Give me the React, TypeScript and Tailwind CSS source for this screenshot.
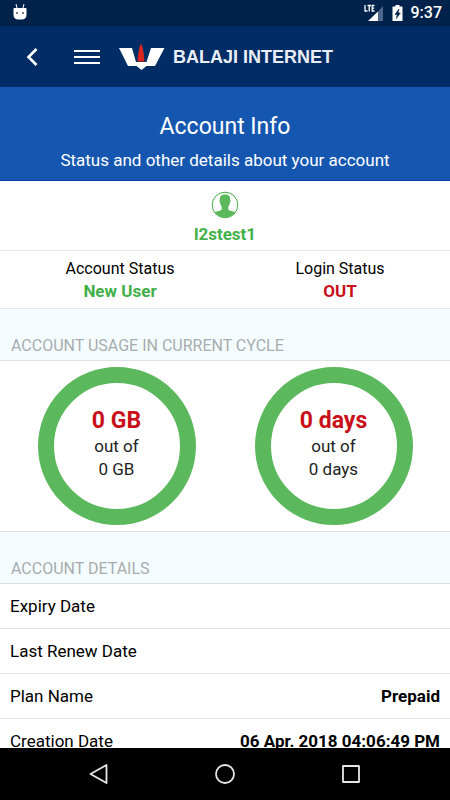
import type { ReactNode } from 'react';

const details = [
  { label: 'Expiry Date', value: '' },
  { label: 'Last Renew Date', value: '' },
  { label: 'Plan Name', value: 'Prepaid' },
  { label: 'Creation Date', value: '06 Apr. 2018 04:06:49 PM' },
];

function StatusBar() {
  return (
    <div className="flex h-[26px] shrink-0 items-center justify-between bg-[#00224b] pr-2 pl-[13px] text-white">
      <svg width="14" height="18" viewBox="0 0 14 18" fill="currentColor" aria-hidden="true">
        <path d="M3 0l1 4M11 0l-1 4" stroke="currentColor" strokeWidth="1" />
        <path d="M1.500 4h11q1 0 1 1v5.500q0 5-5 5h-3q-5 0-5-5V5q0-1 1-1z" />
        <circle cx="4" cy="9" r="1" fill="#44536b" />
        <circle cx="10" cy="9" r="1" fill="#44536b" />
      </svg>
      <div className="flex items-center gap-2">
        <svg width="20" height="18" viewBox="0 0 20 18" aria-label="LTE signal">
          <path d="M14 7.500L19 2v15h-5z" fill="#4d658a" />
          <path d="M14 7.500V17H4z" fill="#fff" />
          <path d="M1 1v6h2.500M3.500 1.500h3.500M5.200 1.500V7.500M10.500 1.500H8.200v5.500h2.300M8.200 4.200h2" fill="none" stroke="#fff" strokeWidth="1.300" />
        </svg>
        <svg width="11" height="18" viewBox="0 0 11 18" aria-label="Battery charging">
          <path d="M1 2.500h2.500V1h4v1.500H10q.5 0 .5.500v13.500q0 .5-.5.500H1q-.5 0-.5-.5V3q0-.5.5-.5z" fill="#fff" />
          <path d="M7 5L3 10.500h2.300L4.300 14.500 8.300 9H6z" fill="#00224b" stroke="#00224b" strokeWidth=".6" />
        </svg>
        <span className="text-base leading-5 font-medium">9:37</span>
      </div>
    </div>
  );
}

function Header() {
  return (
    <header className="flex h-[61px] shrink-0 items-center bg-[#002d65] pl-[26px] text-white">
      <button type="button" aria-label="Back">
        <svg width="13" height="20" viewBox="0 0 13 20" fill="none" stroke="currentColor" strokeWidth="2.600">
          <path d="M10.500 2L2.500 10l8 8" />
        </svg>
      </button>
      <button type="button" aria-label="Menu" className="ml-[35px]">
        <svg width="26" height="18" viewBox="0 0 26 18" fill="none" stroke="currentColor" strokeWidth="2">
          <path d="M0 3h26M0 9h26M0 15h26" />
        </svg>
      </button>
      <a href="#" className="ml-[18px] flex items-center gap-2">
        <svg width="47" height="28" viewBox="0 0 47 28" aria-hidden="true">
          <path d="M1 5h13l4 14h10.500L33 5h13.500L37 23h-8.500l-5 4-5-4H10z" fill="#fff" />
          <path d="M23 .5q2.500 4 3.500 18H19.500q1-14 3.500-18z" fill="#d9261f" />
        </svg>
        <span className="font-['Liberation_Sans',sans-serif] text-lg font-bold text-[#e9eef6]">BALAJI INTERNET</span>
      </a>
    </header>
  );
}

function SectionTitle({ children }: { children: ReactNode }) {
  return (
    <h2 className="flex h-[52px] items-end border-b border-[#dde0e1] bg-[#f4fcff] px-[11px] pb-1 text-base leading-5 text-[#a8acae]">
      {children}
    </h2>
  );
}

function Status({ label, value, color }: { label: string; value: string; color: string }) {
  return (
    <div className="flex-1">
      <p className="text-base leading-[23px]">{label}</p>
      <p className={`text-[17px] leading-[23px] font-bold ${color}`}>{value}</p>
    </div>
  );
}

function UsageRing({ used, total }: { used: string; total: string }) {
  return (
    <div className="flex size-[158px] flex-col items-center justify-center rounded-full border-[16px] border-[#5cb85c] pb-1 text-[17px] leading-[23px] text-[#222]">
      <strong className="text-[23px] leading-7 font-bold text-[#c9101a]">{used}</strong>
      <span>out of</span>
      <span>{total}</span>
    </div>
  );
}

function NavBar() {
  return (
    <nav className="flex h-[52px] shrink-0 items-center justify-around bg-black px-9 text-[#e6e6e6]">
      <button type="button" aria-label="Back">
        <svg width="22" height="22" viewBox="0 0 22 22" fill="none" stroke="currentColor" strokeWidth="1.800" strokeLinejoin="round">
          <path d="M18.500 2v18L2.500 11z" />
        </svg>
      </button>
      <button type="button" aria-label="Home">
        <svg width="22" height="22" viewBox="0 0 22 22" fill="none" stroke="currentColor" strokeWidth="1.800">
          <circle cx="11" cy="11" r="9" />
        </svg>
      </button>
      <button type="button" aria-label="Recent apps">
        <svg width="22" height="22" viewBox="0 0 22 22" fill="none" stroke="currentColor" strokeWidth="1.800" strokeLinejoin="round">
          <path d="M3 3h16v16H3z" />
        </svg>
      </button>
    </nav>
  );
}

export default function App() {
  return (
    <div className="flex h-screen flex-col bg-white font-[Roboto,sans-serif] text-black">
      <StatusBar />
      <Header />
      <main className="min-h-0 flex-1 overflow-hidden">
        {/* Page title */}
        <div className="border-b border-[#003fa5] bg-[#1557b0] pt-6 pb-[7px] text-center text-white">
          <h1 className="text-[23px] leading-8">Account Info</h1>
          <p className="mt-1 text-[17px] leading-[26px]">Status and other details about your account</p>
        </div>

        {/* User */}
        <div className="flex flex-col items-center border-b border-[#e4e4e4] pt-[10px] pb-1 text-[#43b049]">
          <svg width="28" height="28" viewBox="0 0 28 28" aria-hidden="true">
            <circle cx="14" cy="14" r="12.800" fill="none" stroke="#43b049" strokeWidth="1" />
            <path d="M14 3.500c4 0 5.300 2 5.200 5.500.6.500.4 2.400-.4 3-.2 2-.9 3-1.500 3.700v2.800c.8 1.500 4.700 1.400 7 2.700A12.800 12.800 0 0 1 3.700 21.200c2.300-1.300 6.200-1.200 7-2.700v-2.800c-.6-.7-1.300-1.700-1.500-3.700-.8-.6-1-2.500-.4-3C8.700 5.500 10 3.500 14 3.500z" fill="#5cb85c" />
          </svg>
          <p className="mt-1 text-[17px] leading-[23px] font-bold">l2stest1</p>
        </div>

        <div className="flex border-b border-[#e4e4e4] pt-[6px] pb-[5px] pl-[10px] text-center">
          <Status label="Account Status" value="New User" color="text-[#43b049]" />
          <Status label="Login Status" value="OUT" color="text-[#c9101a]" />
        </div>

        {/* Usage */}
        <SectionTitle>ACCOUNT USAGE IN CURRENT CYCLE</SectionTitle>
        <div className="flex justify-around border-b border-[#dde0e1] px-2 py-[6px]">
          <UsageRing used="0 GB" total="0 GB" />
          <UsageRing used="0 days" total="0 days" />
        </div>

        {/* Details */}
        <SectionTitle>ACCOUNT DETAILS</SectionTitle>
        <dl className="text-[17px] leading-6">
          {details.map((item) => (
            <div key={item.label} className="flex justify-between border-b border-[#e4e4e4] px-[10px] py-[10px]">
              <dt>{item.label}</dt>
              <dd className="font-bold">{item.value}</dd>
            </div>
          ))}
        </dl>
      </main>
      <NavBar />
    </div>
  );
}
